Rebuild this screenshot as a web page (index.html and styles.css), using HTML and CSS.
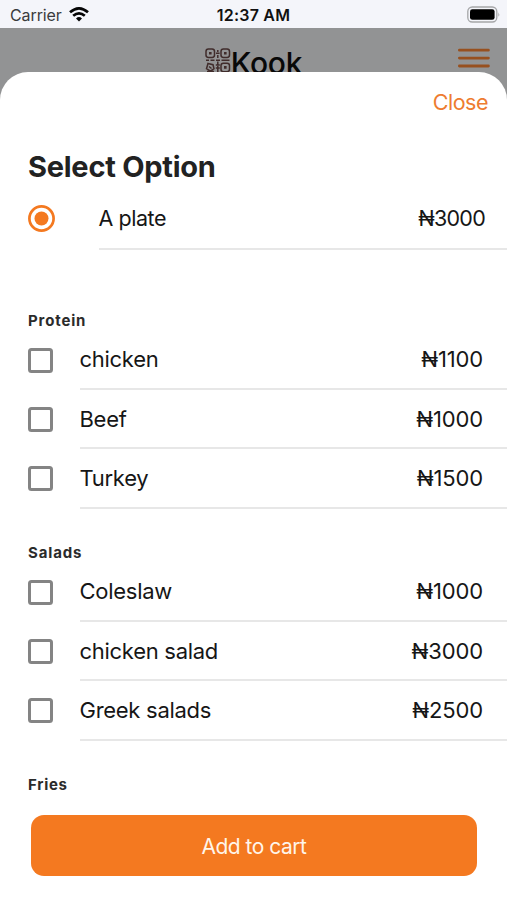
FILE: index.html
```html
<!DOCTYPE html>
<html lang="en">
<head>
<meta charset="utf-8">
<title>Kook</title>
<link rel="stylesheet" href="styles.css">
</head>
<body>
<div class="screen">
  <header class="status">
    <div class="carrier"><span>Carrier</span>
      <svg class="wifi" width="20" height="15" viewBox="0 0 20 15" fill="none" stroke="#050505" stroke-width="2.7"><path d="M1 5.3Q10-2.5 19 5.3"/><path d="M4.2 8.8Q10 3.8 15.8 8.8"/><path d="M7 11.4Q10 8.8 13 11.4L10 14.5Z" fill="#050505" stroke="none"/></svg>
    </div>
    <div class="time">12:37 AM</div>
    <svg class="battery" width="34" height="18" viewBox="0 0 34 18"><rect x=".8" y="1" width="29" height="15" rx="4.5" fill="none" stroke="#a5a6a8" stroke-width="1.3"/><rect x="3" y="3.2" width="24.6" height="10.6" rx="2.4" fill="#000"/><path d="M31.4 6.2q1.7 2.3 0 4.6z" fill="#a5a6a8"/></svg>
  </header>
  <div class="topbar">
    <div class="brand">
      <svg width="26" height="26" viewBox="0 0 26 26" fill="none" stroke="#402c2b" stroke-width="1.5"><rect x="1" y="1" width="8.5" height="8.5" rx="2.4"/><rect x="16" y="1" width="8.5" height="8.5" rx="2.4"/><rect x="16" y="15.2" width="8.5" height="8.5" rx="2.4"/><path d="M4 5.2h2.6M19 5.2h2.6M19 19.4h2.6" stroke-width="2.6"/><path d="M12.8 2v2M11 5.3h3.6M12.8 7v3M1 12.2h3M5.5 12.2h4M11 12.2h4M16.5 12.2h8M12.8 13.5v3M10.8 17h4M10.8 20h4M12.8 18v6" /><path d="M3 15.5l5 1.2 1 4-3.5 2.5-4-2.5zM4 18.5l2.5 2M2 23.5h7"/></svg>
      <span>Kook</span>
    </div>
    <svg class="menu" width="32" height="22" viewBox="0 0 32 22" stroke="#97501f" stroke-width="2.8" stroke-linecap="round"><path d="M1.4 3.2h29M1.4 11.1h29M1.4 19h29"/></svg>
  </div>
  <main class="sheet">
    <div class="close">Close</div>
    <h1>Select Option</h1>
    <div class="plate">
      <svg class="radio" width="28" height="28" viewBox="0 0 28 28"><circle cx="13.5" cy="13.5" r="12.1" fill="none" stroke="#f47920" stroke-width="2.7"/><circle cx="13.5" cy="13.5" r="7" fill="#f47920"/></svg>
      <div class="line"><span class="name">A plate</span><span class="price">₦3000</span></div>
    </div>
    <section>
      <h2>Protein</h2>
      <div class="row"><span class="check"></span><div class="line"><span class="name">chicken</span><span class="price">₦1100</span></div></div>
      <div class="row"><span class="check"></span><div class="line"><span class="name">Beef</span><span class="price">₦1000</span></div></div>
      <div class="row"><span class="check"></span><div class="line"><span class="name">Turkey</span><span class="price">₦1500</span></div></div>
    </section>
    <section>
      <h2>Salads</h2>
      <div class="row"><span class="check"></span><div class="line"><span class="name">Coleslaw</span><span class="price">₦1000</span></div></div>
      <div class="row"><span class="check"></span><div class="line"><span class="name">chicken salad</span><span class="price">₦3000</span></div></div>
      <div class="row"><span class="check"></span><div class="line"><span class="name">Greek salads</span><span class="price">₦2500</span></div></div>
    </section>
    <section class="last"><h2>Fries</h2></section>
    <button class="add">Add to cart</button>
  </main>
</div>
</body>
</html>
```
FILE: styles.css
```css
* { box-sizing: border-box; }
body { margin: 0; font-family: Inter, "Liberation Sans", sans-serif; color: #161616; }
.screen { width: 507px; height: 900px; overflow: hidden; display: flex; flex-direction: column; background: #929394; }
.status { height: 28px; flex: none; background: #f4f5fa; display: grid; grid-template-columns: 1fr auto 1fr; align-items: center; padding: 2px 6px 0 10px; }
.carrier { display: flex; align-items: center; gap: 7px; font-size: 16px; letter-spacing: -.1px; color: #3b3b3d; }
.wifi { margin-top: -2px; }
.time { font-size: 16px; font-weight: 600; letter-spacing: .2px; margin-right: 4px; color: #111; }
.battery { justify-self: end; margin-top: -1px; }
.topbar { height: 43.5px; flex: none; display: grid; grid-template-columns: 1fr auto 1fr; padding: 19px 17px 0 17px; }
.brand { grid-column: 2; display: flex; gap: 0; height: 40px; font-size: 30px; line-height: 32px; font-weight: 500; letter-spacing: -.25px; color: #080808; }
.brand svg { margin-top: 1px; }
.menu { justify-self: end; }
.sheet { position: relative; flex: 1; background: #fff; border-radius: 28px 28px 0 0; padding-left: 28px; }
.close { text-align: right; padding: 16px 19px 0 0; height: 77px; font-size: 21.5px; line-height: 28px; letter-spacing: -.5px; color: #ee7c30; }
h1 { margin: 0; height: 40px; font-size: 29px; line-height: 36px; font-weight: 700; letter-spacing: -.25px; color: #222; }
.plate { display: flex; height: 61px; }
.radio { flex: none; margin: 16px 42.5px 0 0; }
.line { flex: 1; display: flex; justify-content: space-between; align-items: center; padding-right: 24px; border-bottom: 2px solid #e7e7e7; font-size: 22px; }
.name { letter-spacing: -.28px; }
.price { letter-spacing: -.15px; }
.plate .line { padding-right: 22px; font-size: 21.5px; }
.plate .name { letter-spacing: -.45px; }
.plate .price { letter-spacing: -.75px; }
section { height: 232px; }
.plate + section { margin-top: 60px; }
h2 { margin: 0; height: 21px; font-size: 15px; line-height: 22px; font-weight: 700; letter-spacing: .85px; color: #2b2b2b; }
.row { display: flex; height: 59.4px; }
.check { flex: none; width: 25px; height: 25px; margin: 17px 26.5px 0 0; border: 3px solid #848484; border-radius: 3.5px; }
.last { height: 41px; }
.last h2 { letter-spacing: .7px; }
.add { display: block; width: 445.5px; height: 61px; margin-left: 3.2px; padding: 2px 0 0; border: 0; border-radius: 13px; background: #f47920; color: #fff5ea; font: 21px Inter, sans-serif; letter-spacing: -.5px; }
```
